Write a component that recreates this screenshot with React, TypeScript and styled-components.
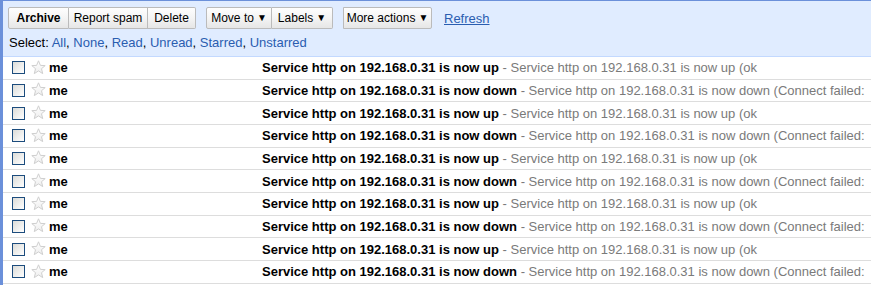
import React from 'react';
import styled, { createGlobalStyle } from 'styled-components';

const GlobalStyle = createGlobalStyle`
  html, body {
    margin: 0;
    padding: 0;
    background: #ffffff;
  }
  body {
    font-family: "Liberation Sans", Arial, sans-serif;
  }
`;

const Wrap = styled.div`
  width: 871px;
  height: 285px;
  overflow: hidden;
  border-left: 3px solid #6b90da;
  box-sizing: border-box;
`;

const Toolbar = styled.div`
  height: 57px;
  box-sizing: border-box;
  background-color: #e0ecff;
  border-top: 1px solid #6b90da;
  border-bottom: 1px solid #c3d9ff;
  padding: 6px 0 0 5px;
  display: flex;
  flex-direction: column;
  gap: 6px;
`;

const ButtonRow = styled.div`
  display: flex;
  align-items: center;
  gap: 10px;
  height: 22px;
`;

const Group = styled.div`
  display: flex;
`;

const Button = styled.button<{ $bold?: boolean; $width: number }>`
  width: ${(p) => p.$width}px;
  height: 22px;
  padding: 0;
  margin: 0;
  font-family: "Liberation Sans", Arial, sans-serif;
  font-size: 12px;
  font-weight: ${(p) => (p.$bold ? 'bold' : 'normal')};
  color: #000;
  background: linear-gradient(#fefefe, #f4f4f4 50%, #e6e6e6);
  border: 1px solid #bbbbbb;
  border-left-width: 0;
  cursor: pointer;
  display: flex;
  align-items: center;
  justify-content: center;
  gap: 3px;

  &:first-child {
    border-left-width: 1px;
    border-radius: 2px 0 0 2px;
  }
  &:last-child {
    border-radius: 0 2px 2px 0;
  }
`;

const Arrow = styled.span`
  font-size: 10px;
  line-height: 1;
`;

const Refresh = styled.a`
  margin-left: 2px;
  font-size: 13px;
  color: #2a5db0;
  text-decoration: underline;
  cursor: pointer;
`;

const SelectLine = styled.div`
  font-size: 13px;
  color: #000;
  padding-left: 1px;

  a {
    color: #2a5db0;
    text-decoration: none;
    cursor: pointer;
  }
`;

const List = styled.div`
  display: flex;
  flex-direction: column;
`;

const Row = styled.div`
  height: 22.67px;
  box-sizing: border-box;
  border-bottom: 1px solid #dddddd;
  display: grid;
  grid-template-columns: 28px 18px 213px 1fr;
  align-items: center;
  font-size: 13px;
  white-space: nowrap;
`;

const Check = styled.span`
  width: 11px;
  height: 11px;
  margin-left: 9px;
  border: 1px solid #1c4c7d;
  background: linear-gradient(135deg, #dcdcd8, #ffffff);
`;

const Sender = styled.span`
  font-weight: bold;
  color: #000;
`;

const Message = styled.span`
  overflow: hidden;
`;

const Subject = styled.span`
  font-weight: bold;
  color: #000;
`;

const Snippet = styled.span`
  color: #7a7a7a;
`;

const Star = () => (
  <svg width="15" height="15" viewBox="0 0 15 15" style={{ marginTop: -1 }}>
    <defs>
      <linearGradient id="sg" x1="0" y1="0" x2="0" y2="1">
        <stop offset="0" stopColor="#ffffff" />
        <stop offset="1" stopColor="#eeeeee" />
      </linearGradient>
    </defs>
    <polygon
      points="7.5,0.8 9.4,5.4 14.2,5.6 10.5,8.7 11.7,13.6 7.5,10.9 3.3,13.6 4.5,8.7 0.8,5.6 5.6,5.4"
      fill="url(#sg)"
      stroke="#cfcfcf"
      strokeWidth="1"
      strokeLinejoin="round"
    />
  </svg>
);

const messages = Array.from({ length: 10 }, (_, i) =>
  i % 2 === 0
    ? { subject: 'Service http on 192.168.0.31 is now up', snippet: 'Service http on 192.168.0.31 is now up (ok' }
    : {
        subject: 'Service http on 192.168.0.31 is now down',
        snippet: 'Service http on 192.168.0.31 is now down (Connect failed:',
      }
);

const App = () => {
  return (
    <Wrap>
      <GlobalStyle />
      <Toolbar>
        <ButtonRow>
          <Group>
            <Button $bold $width={61}>Archive</Button>
            <Button $width={79}>Report spam</Button>
            <Button $width={48}>Delete</Button>
          </Group>
          <Group>
            <Button $width={66}>
              Move to <Arrow>▼</Arrow>
            </Button>
            <Button $width={61}>
              Labels <Arrow>▼</Arrow>
            </Button>
          </Group>
          <Group>
            <Button $width={89}>
              More actions <Arrow>▼</Arrow>
            </Button>
          </Group>
          <Refresh>Refresh</Refresh>
        </ButtonRow>
        <SelectLine>
          Select: <a>All</a>, <a>None</a>, <a>Read</a>, <a>Unread</a>, <a>Starred</a>, <a>Unstarred</a>
        </SelectLine>
      </Toolbar>
      <List>
        {messages.map((m, i) => (
          <Row key={i}>
            <Check />
            <Star />
            <Sender>me</Sender>
            <Message>
              <Subject>{m.subject}</Subject>
              <Snippet> - {m.snippet}</Snippet>
            </Message>
          </Row>
        ))}
      </List>
    </Wrap>
  );
};

export default App;
